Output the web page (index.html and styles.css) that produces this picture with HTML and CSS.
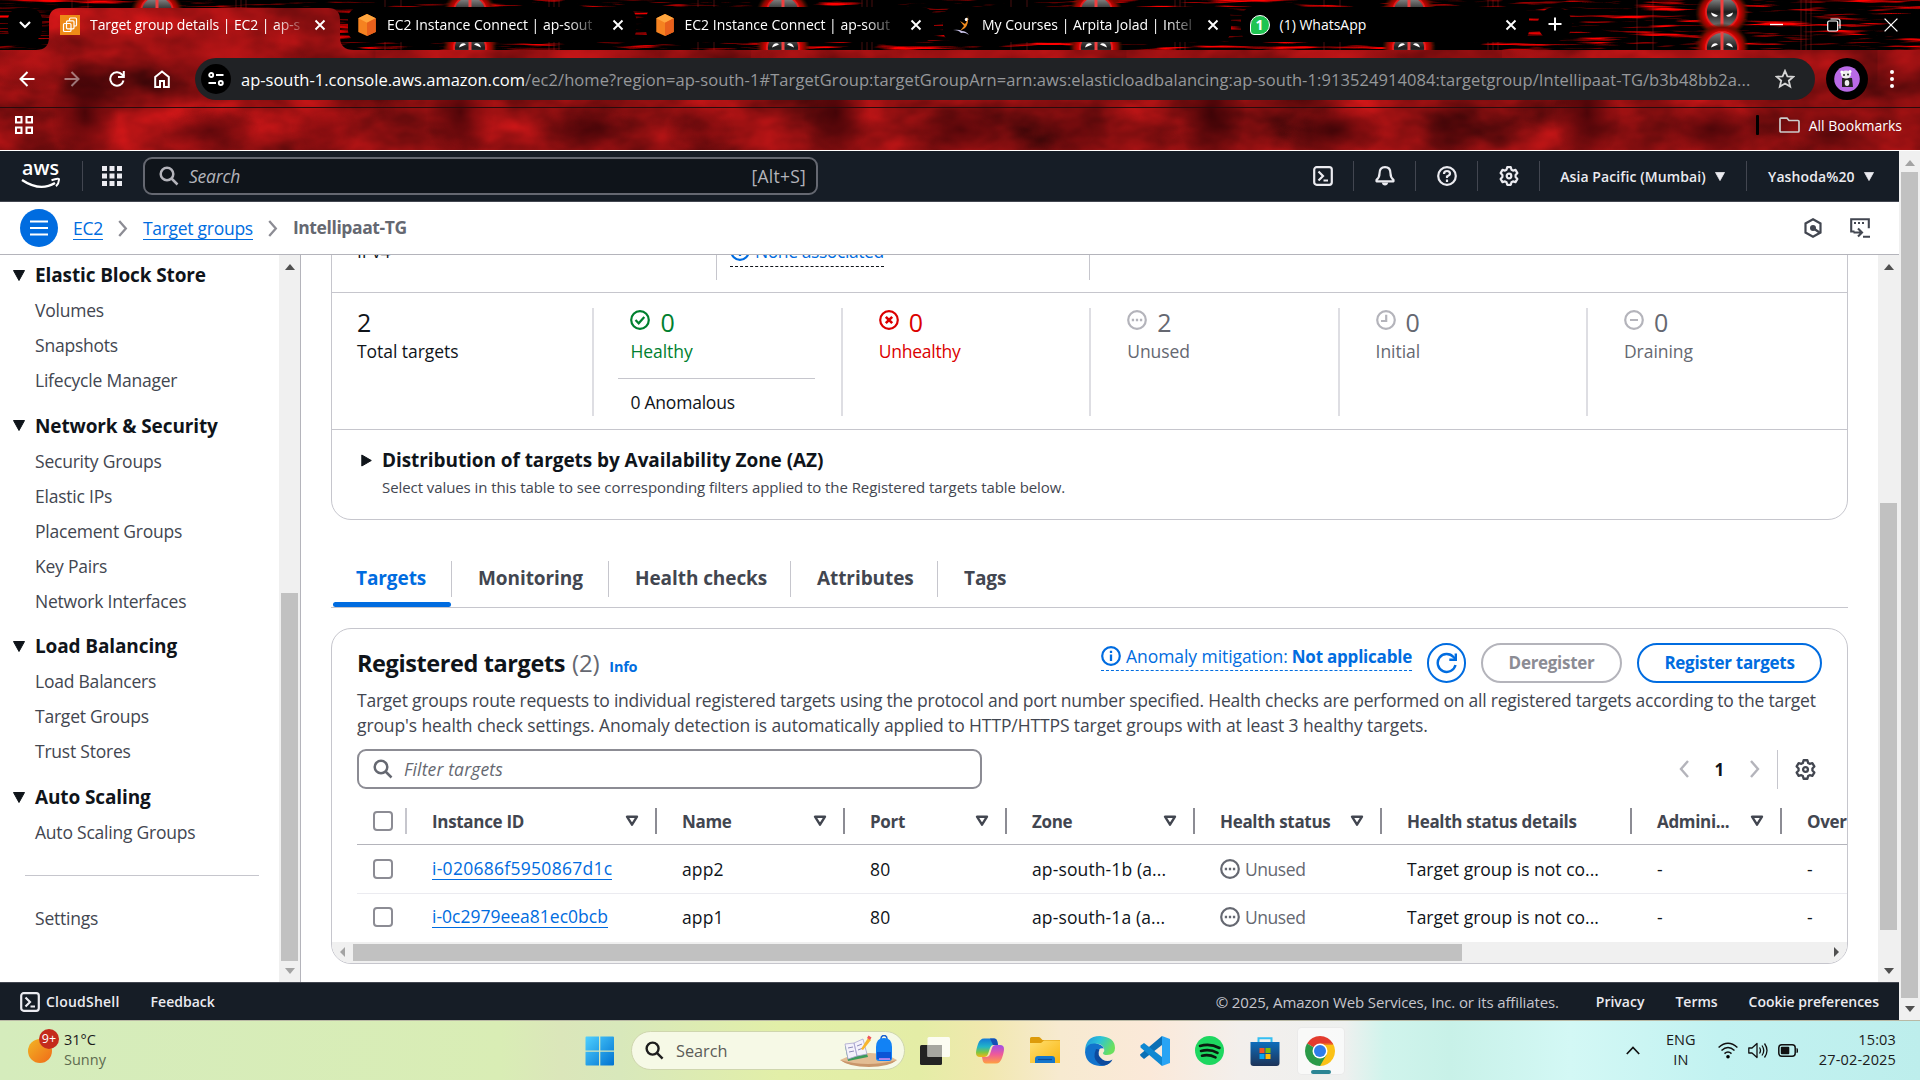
FILE: index.html
```
<!DOCTYPE html>
<html lang="en">
<head>
<meta charset="utf-8">
<title>Target group details | EC2 | ap-south-1</title>
<link rel="stylesheet" href="styles.css">
</head>
<body>
<svg class="defs" aria-hidden="true">
  <defs>
    <symbol id="close" viewBox="0 0 12 12"><path d="M1.500 1.500l9 9M10.500 1.500l-9 9" fill="none" stroke="currentColor" stroke-width="1.900"/></symbol>
    <symbol id="cube" viewBox="0 0 20 24"><path d="M10 0l9.500 4.500v15L10 24 .5 19.500v-15z" fill="#f58220"/><path d="M10 0l9.500 4.500L10 9.500.5 4.500z" fill="#ffa63f"/><path d="M10 9.500l9.500-5v15L10 24z" fill="#e8601c"/></symbol>
    <symbol id="search" viewBox="0 0 20 20"><circle cx="8" cy="8" r="6.300" fill="none" stroke="currentColor" stroke-width="2.500"/><path d="M12.500 12.500L18.500 18.500" stroke="currentColor" stroke-width="2.500"/></symbol>
    <symbol id="shell" viewBox="0 0 20 20"><rect x="1.200" y="1.200" width="17.600" height="17.600" rx="2.500" fill="none" stroke="currentColor" stroke-width="2.200"/><path d="M5.500 5.500L10 10l-4.500 4.500M10.500 14.500h4.500" fill="none" stroke="currentColor" stroke-width="2.200"/></symbol>
    <symbol id="gear" viewBox="0 0 20 20"><path d="M8.200 1.200h3.600l.7 2.500 1.500.9 2.500-.7 1.900 3.200-1.800 1.900v2l1.800 1.900-1.900 3.200-2.500-.7-1.500.9-.7 2.500H8.200l-.7-2.500-1.500-.9-2.500.7-1.900-3.200L3.400 11V9L1.600 7.100l1.900-3.200 2.500.7 1.500-.9z" fill="none" stroke="currentColor" stroke-width="2.200" stroke-linejoin="round"/><circle cx="10" cy="10" r="2.300" fill="none" stroke="currentColor" stroke-width="2.200"/></symbol>
    <symbol id="info" viewBox="0 0 20 20"><circle cx="10" cy="10" r="8.800" fill="none" stroke="currentColor" stroke-width="2.200"/><path d="M10 8.500v6.500M10 4.800v2.200" stroke="currentColor" stroke-width="2.300"/></symbol>
    <symbol id="pending" viewBox="0 0 20 20"><circle cx="10" cy="10" r="8.800" fill="none" stroke="currentColor" stroke-width="2.200"/><path d="M4.800 10h2.300M8.850 10h2.300M12.900 10h2.300" stroke="currentColor" stroke-width="2.300"/></symbol>
    <symbol id="ok" viewBox="0 0 20 20"><circle cx="10" cy="10" r="8.800" fill="none" stroke="currentColor" stroke-width="2.200"/><path d="M5.500 10l3.200 3.300 5.600-6.300" fill="none" stroke="currentColor" stroke-width="2.200"/></symbol>
    <symbol id="bad" viewBox="0 0 20 20"><circle cx="10" cy="10" r="8.800" fill="none" stroke="currentColor" stroke-width="2.200"/><path d="M6.800 6.800l6.400 6.400M13.200 6.800l-6.400 6.400" fill="none" stroke="currentColor" stroke-width="2.600"/></symbol>
    <symbol id="clock" viewBox="0 0 20 20"><circle cx="10" cy="10" r="8.800" fill="none" stroke="currentColor" stroke-width="2.200"/><path d="M10.200 4.800v6.200H5" fill="none" stroke="currentColor" stroke-width="2.200"/></symbol>
    <symbol id="minus" viewBox="0 0 20 20"><circle cx="10" cy="10" r="8.800" fill="none" stroke="currentColor" stroke-width="2.200"/><path d="M6 10h8" stroke="currentColor" stroke-width="2.200"/></symbol>
    <symbol id="sort" viewBox="0 0 14 12"><path d="M2 1.700h10L7 9.700z" fill="none" stroke="currentColor" stroke-width="2.400" stroke-linejoin="round"/></symbol>
    <symbol id="caret" viewBox="0 0 12 11"><path d="M.5.5h11L6 10.500z" fill="currentColor" stroke="currentColor" stroke-linejoin="round"/></symbol>
    <symbol id="chev" viewBox="0 0 10 18"><path d="M1 1l7 8-7 8" fill="none" stroke="currentColor" stroke-width="2.400"/></symbol>
  </defs>
</svg>

<header class="browser">
  <svg class="theme" width="1920" height="151" aria-hidden="true">
    <defs>
      <filter id="streaks" x="0" y="0" width="100%" height="100%" color-interpolation-filters="sRGB">
        <feTurbulence type="fractalNoise" baseFrequency="0.016 0.260" numOctaves="3" seed="8"/>
        <feColorMatrix values="4.200 0 0 0 -2.250  0 0 0 0 0  0 0 0 0 0  0 0 0 0 1"/>
      </filter>
      <filter id="clouds" x="0" y="0" width="100%" height="100%" color-interpolation-filters="sRGB">
        <feTurbulence type="fractalNoise" baseFrequency="0.012 0.020" numOctaves="4" seed="5"/>
        <feColorMatrix values=".8 0 0 0 .16  .09 0 0 0 .015  .09 0 0 0 .02  0 0 0 0 1"/>
      </filter>
      <radialGradient id="shade"><stop offset="0" stop-color="#2a0004" stop-opacity=".75"/><stop offset="1" stop-color="#2a0004" stop-opacity="0"/></radialGradient>
      <radialGradient id="light"><stop offset="0" stop-color="#d8181a" stop-opacity=".7"/><stop offset="1" stop-color="#d8181a" stop-opacity="0"/></radialGradient>
      <radialGradient id="glow"><stop offset=".62" stop-color="#e00000"/><stop offset=".82" stop-color="#7a0800"/><stop offset="1" stop-color="#3a1a00" stop-opacity="0"/></radialGradient>
      <linearGradient id="steel" x1="0" x2="0" y1="0" y2="1"><stop offset="0" stop-color="#9a9a9a"/><stop offset=".5" stop-color="#1c1c1c"/><stop offset="1" stop-color="#7f7f7f"/></linearGradient>
      <g id="mask">
        <ellipse cx="0" cy="13" rx="27" ry="24" fill="url(#glow)"/>
        <circle cx="0" cy="12" r="16" fill="url(#steel)" stroke="#e02020" stroke-width="1.800"/>
        <path d="M0-4v32" stroke="#f04040" stroke-width="3"/>
        <path d="M-11 12.500l7 3c-2 2.400-6 1.500-7-3zM11 12.500l-7 3c2 2.400 6 1.500 7-3z" fill="#fff"/>
      </g>
      <pattern id="masks" width="313" height="60" patternUnits="userSpaceOnUse">
        <path d="M72 0v60M88 0v60M236 0v60M241 0v60M246 0v60" stroke="#b02020" stroke-opacity=".4"/>
        <use href="#mask" x="157"/>
        <use href="#mask" transform="translate(157 60) scale(1 -1)"/>
      </pattern>
      <pattern id="spots" width="375.500" height="151" patternUnits="userSpaceOnUse">
        <ellipse cx="215" cy="55" rx="70" ry="34" fill="url(#light)"/>
        <ellipse cx="30" cy="62" rx="50" ry="30" fill="url(#light)" opacity=".6"/>
        <ellipse cx="85" cy="112" rx="34" ry="56" fill="url(#shade)"/>
        <ellipse cx="210" cy="130" rx="50" ry="26" fill="url(#shade)" opacity=".8"/>
        <ellipse cx="325" cy="130" rx="36" ry="30" fill="url(#shade)" opacity=".5"/>
      </pattern>
      <clipPath id="toolbarShape"><path d="M0 50h36q13 0 13-13V20q0-12 12-12h267q12 0 12 12v17q0 13 14 13h1566v100H0z"/></clipPath>
    </defs>
    <rect width="1920" height="50" filter="url(#streaks)"/>
    <rect width="1920" height="50" fill="url(#masks)"/>
    <g clip-path="url(#toolbarShape)">
      <rect width="1920" height="150" filter="url(#clouds)"/>
      <rect width="1920" height="150" fill="url(#spots)"/>
    </g>
    <path d="M0 107.500h1920" stroke="#2a0a0c"/>
    <path d="M0 150.500h1920" stroke="#fff"/>
  </svg>

  <div class="tabstrip">
    <div class="tab-menu"><svg width="12" height="8" viewBox="0 0 12 8"><path d="M1 1l5 5 5-5" fill="none" stroke="#fff" stroke-width="2.200"/></svg></div>
    <div class="tab tab-active">
      <svg class="fav" width="20" height="20" viewBox="0 0 20 20"><rect width="20" height="20" fill="#ee8a17"/><g fill="none" stroke="#fff" stroke-width="1.200"><rect x="3.500" y="8.500" width="7.500" height="8" rx="1"/><rect x="6.500" y="5.800" width="7.500" height="8" rx="1"/><path d="M9.500 5.800V4q0-1 1-1h5q1 0 1 1v6q0 1-1 1h-1.500"/></g></svg>
      <span class="tab-title">Target group details | EC2 | ap-s</span><svg class="x" width="12" height="12"><use href="#close"/></svg>
    </div>
    <div class="tab"><svg class="fav" width="20" height="22"><use href="#cube"/></svg><span class="tab-title">EC2 Instance Connect | ap-sout</span><svg class="x" width="12" height="12"><use href="#close"/></svg></div>
    <div class="tab"><svg class="fav" width="20" height="22"><use href="#cube"/></svg><span class="tab-title">EC2 Instance Connect | ap-sout</span><svg class="x" width="12" height="12"><use href="#close"/></svg></div>
    <div class="tab"><svg class="fav" width="20" height="20" viewBox="0 0 20 20"><circle cx="14.500" cy="4.500" r="1.700" fill="#fff"/><path d="M16 0q1 9-3 13l-5 3 4-5-4-5 5 3q3-3 3-9z" fill="#f08a1d"/><path d="M1 15q6-1 9 1 4 0 7 4-4-3-8-2-2-3-8-3z" fill="#c9c3ea"/></svg><span class="tab-title">My Courses | Arpita Jolad | Intel</span><svg class="x" width="12" height="12"><use href="#close"/></svg></div>
    <div class="tab"><span class="fav whatsapp">1</span><span class="tab-title full">(1) WhatsApp</span><svg class="x" width="12" height="12"><use href="#close"/></svg></div>
    <div class="newtab"><svg width="14" height="14" viewBox="0 0 14 14"><path d="M7 .5v13M.5 7h13" stroke="#fff" stroke-width="2"/></svg></div>
    <div class="winctl">
      <svg width="14" height="14" viewBox="0 0 14 14"><path d="M0 6.500h13" stroke="#fff" stroke-width="1.300"/></svg>
      <svg width="14" height="14" viewBox="0 0 14 14"><rect x=".7" y="3" width="10" height="10" rx="1.500" fill="#000" stroke="#fff" stroke-width="1.200"/><path d="M3.500 1h7.500q2 0 2 2v7.500" fill="none" stroke="#fff" stroke-width="1.200"/></svg>
      <svg width="14" height="14" viewBox="0 0 14 14"><path d="M.6.6l12.800 12.800M13.400.6L.6 13.400" stroke="#fff" stroke-width="1.300"/></svg>
    </div>
  </div>

  <div class="toolbar">
    <svg width="16" height="16" viewBox="0 0 16 16"><path d="M15.500 8H1.500M8.500 1L1.500 8l7 7" fill="none" stroke="#fff" stroke-width="2"/></svg>
    <svg class="dim" width="16" height="16" viewBox="0 0 16 16"><path d="M.5 8h14M7.500 1l7 7-7 7" fill="none" stroke="#fff" stroke-width="2"/></svg>
    <svg width="16" height="16" viewBox="0 0 16 16"><path d="M14.500 9.500A6.700 6.700 0 1 1 13 3.500L15 5.500" fill="none" stroke="#fff" stroke-width="2"/><path d="M14.800 0v6H9" fill="none" stroke="#fff" stroke-width="2"/></svg>
    <svg width="16" height="18" viewBox="0 0 16 18"><path d="M1.200 17V7L8 1.500 14.800 7v10H10v-6H6v6z" fill="none" stroke="#fff" stroke-width="2"/></svg>
    <div class="omnibox">
      <span class="site"><svg width="16" height="14" viewBox="0 0 16 14"><g fill="none" stroke="#fff" stroke-width="1.900"><circle cx="3.200" cy="3" r="2"/><path d="M8 3h7.500M.5 11H8"/><circle cx="12.800" cy="11" r="2"/></g></svg></span>
      <span class="url"><b>ap-south-1.console.aws.amazon.com</b>/ec2/home?region=ap-south-1#TargetGroup:targetGroupArn=arn:aws:elasticloadbalancing:ap-south-1:913524914084:targetgroup/Intellipaat-TG/b3b48bb2a...</span>
      <svg class="star" width="20" height="20" viewBox="0 0 20 20"><path d="M10 1.800l2.400 5.500 6 .5-4.600 3.900 1.400 5.900L10 14.500l-5.200 3.100 1.400-5.900L1.600 7.800l6-.5z" fill="none" stroke="#d5d5d5" stroke-width="1.800"/></svg>
    </div>
    <span class="avatar"><svg width="26" height="26" viewBox="0 0 26 26"><circle cx="13" cy="13" r="12.800" fill="#b96ae6"/><path d="M8 12h10l1 9H8z" fill="#222"/><ellipse cx="12" cy="8.500" rx="5" ry="4" fill="#eee"/><circle cx="7.800" cy="6" r="1.500" fill="#fff"/><circle cx="16" cy="5.500" r="1.500" fill="#fff"/><circle cx="10" cy="9" r="1" fill="#222"/><circle cx="14" cy="8.500" r="1" fill="#222"/><ellipse cx="13" cy="17" rx="2.300" ry="3" fill="#eee"/></svg></span>
    <svg class="dots" width="4" height="18" viewBox="0 0 4 18"><g fill="#fff"><circle cx="2" cy="2" r="2"/><circle cx="2" cy="9" r="2"/><circle cx="2" cy="16" r="2"/></g></svg>
  </div>

  <div class="bookmarks">
    <svg width="18" height="18" viewBox="0 0 18 18"><g fill="none" stroke="#fff" stroke-width="2"><path d="M1 1h5.500v5.500H1zM11.500 1H17v5.500h-5.500zM1 11.500h5.500V17H1zM11.500 11.500H17V17h-5.500z"/></g></svg>
    <div class="all-bm"><span class="bm-sep"></span><svg width="21" height="16" viewBox="0 0 21 16"><path d="M2 1.200h6l2 2.300h9q1 0 1 1V14q0 1-1 1H2q-1 0-1-1V2q0-.8 1-.8z" fill="none" stroke="#ccc" stroke-width="1.700"/></svg><span>All Bookmarks</span></div>
  </div>
</header>

<div class="viewport">
  <div class="console">
    <nav class="topnav">
      <svg class="aws" width="40" height="28" viewBox="0 0 40 28"><text x="1" y="13" textLength="37" lengthAdjust="spacingAndGlyphs">aws</text><path d="M1 18q18 12 33 3" fill="none" stroke="#fff" stroke-width="2.400"/><path d="M30.500 18.200q8-2.500 7.500-.5-.2 4-3 6.500" fill="none" stroke="#fff" stroke-width="2"/></svg>
      <span class="sep"></span>
      <svg class="grid9" width="20" height="20" viewBox="0 0 20 20"><path d="M0 2.500h5M7.500 2.500h5M15 2.500h5M0 10h5M7.500 10h5M15 10h5M0 17.500h5M7.500 17.500h5M15 17.500h5" stroke="#ebebf0" stroke-width="5"/></svg>
      <div class="searchbox"><svg width="20" height="20"><use href="#search"/></svg><i>Search</i><span>[Alt+S]</span></div>
      <div class="nav-right">
        <span class="cell"><svg width="20" height="20"><use href="#shell"/></svg></span>
        <span class="cell"><svg width="20" height="20" viewBox="0 0 20 20"><path d="M10 1.200q5.500 0 5.500 6.300 0 4 3 6.300v1.500h-17v-1.500q3-2.300 3-6.300 0-6.300 5.500-6.300z" fill="none" stroke="currentColor" stroke-width="2.200" stroke-linejoin="round"/><path d="M6.800 16.500q.5 3 3.200 3t3.200-3z" fill="currentColor"/></svg></span>
        <span class="cell"><svg width="20" height="20" viewBox="0 0 20 20"><circle cx="10" cy="10" r="8.800" fill="none" stroke="currentColor" stroke-width="2.200"/><path d="M7 8q0-3 3-3t3 2.600Q13 9.300 10 10.500V12M10 13.500V16" fill="none" stroke="currentColor" stroke-width="2.200"/></svg></span>
        <span class="cell"><svg width="20" height="20"><use href="#gear"/></svg></span>
        <span class="cell region">Asia Pacific (Mumbai)<svg width="10" height="9"><use href="#caret"/></svg></span>
        <span class="cell user">Yashoda%20<svg width="10" height="9"><use href="#caret"/></svg></span>
      </div>
    </nav>

    <div class="crumbs">
      <span class="burger"><svg width="18" height="16" viewBox="0 0 18 16"><path d="M0 1.500h18M0 8h18M0 14.500h18" stroke="#fff" stroke-width="2.200"/></svg></span>
      <a class="c1">EC2</a><svg width="10" height="17"><use href="#chev"/></svg>
      <a class="c2">Target groups</a><svg width="10" height="17"><use href="#chev"/></svg>
      <b>Intellipaat-TG</b>
      <svg class="tool" width="18" height="20" viewBox="0 0 18 20"><path d="M9 1.300l7.500 4.200v9L9 18.700l-7.500-4.200v-9z" fill="none" stroke="#424650" stroke-width="2.200"/><circle cx="9" cy="10" r="3" fill="#424650"/><path d="M9 10l6.500 4.500" stroke="#424650" stroke-width="2.200"/></svg>
      <svg class="tool2" width="20" height="20" viewBox="0 0 20 20"><g fill="none" stroke="#424650" stroke-width="2.100"><path d="M4.500 13.500H1.200V1.200h17.600v9M4 5h2M8 5h2M12 5h2M3.500 14.500H11M8 10.500l4 4-4 4M13 18.800h7"/></g></svg>
    </div>

    <div class="work">
      <aside class="side">
        <div class="side-list">
          <h3><svg width="12" height="11"><use href="#caret"/></svg>Elastic Block Store</h3>
          <a>Volumes</a><a>Snapshots</a><a>Lifecycle Manager</a>
          <h3><svg width="12" height="11"><use href="#caret"/></svg>Network &amp; Security</h3>
          <a>Security Groups</a><a>Elastic IPs</a><a>Placement Groups</a><a>Key Pairs</a><a>Network Interfaces</a>
          <h3><svg width="12" height="11"><use href="#caret"/></svg>Load Balancing</h3>
          <a>Load Balancers</a><a>Target Groups</a><a>Trust Stores</a>
          <h3><svg width="12" height="11"><use href="#caret"/></svg>Auto Scaling</h3>
          <a>Auto Scaling Groups</a>
          <hr>
          <a>Settings</a>
        </div>
        <div class="vbar side-bar"><i class="up"></i><span class="thumb"></span><i class="down off"></i></div>
      </aside>

      <main class="main">
        <section class="card details">
          <div class="facts">
            <div>IPv4</div>
            <div><span class="none"><svg width="20" height="20"><use href="#info"/></svg>None associated</span></div>
            <div></div>
          </div>
          <div class="stats">
            <div class="stat first"><p class="num">2</p><p class="lbl">Total targets</p></div>
            <div class="stat"><p class="num green"><svg width="20" height="20"><use href="#ok"/></svg>0</p><p class="lbl green">Healthy</p><p class="anom">0 Anomalous</p></div>
            <div class="stat"><p class="num red"><svg width="20" height="20"><use href="#bad"/></svg>0</p><p class="lbl red">Unhealthy</p></div>
            <div class="stat grey"><p class="num"><svg width="20" height="20"><use href="#pending"/></svg>2</p><p class="lbl">Unused</p></div>
            <div class="stat grey"><p class="num"><svg width="20" height="20"><use href="#clock"/></svg>0</p><p class="lbl">Initial</p></div>
            <div class="stat grey"><p class="num"><svg width="20" height="20"><use href="#minus"/></svg>0</p><p class="lbl">Draining</p></div>
          </div>
          <div class="distro">
            <h2><svg width="11" height="13" viewBox="0 0 11 13"><path d="M.8 1v11l9.500-5.500z" fill="#0f141a" stroke="#0f141a" stroke-linejoin="round"/></svg>Distribution of targets by Availability Zone (AZ)</h2>
            <p>Select values in this table to see corresponding filters applied to the Registered targets table below.</p>
          </div>
        </section>

        <div class="tabs">
          <span class="on">Targets</span><span class="t-mon">Monitoring</span><span class="t-health">Health checks</span><span class="t-attr">Attributes</span><span>Tags</span>
        </div>

        <section class="card targets">
          <div class="head">
            <h1>Registered targets</h1><span class="count">(2)</span><b class="infolink">Info</b>
            <span class="anomaly"><svg width="20" height="20"><use href="#info"/></svg><em>Anomaly mitigation:</em><b>Not applicable</b></span>
            <button class="btn round"><svg width="22" height="22" viewBox="0 0 22 22"><path d="M19.500 13A9 9 0 1 1 17.500 5l2.500 2.500" fill="none" stroke="currentColor" stroke-width="2.400"/><path d="M19.800 1.500v6.300h-6.500" fill="none" stroke="currentColor" stroke-width="2.400"/></svg></button>
            <button class="btn off">Deregister</button>
            <button class="btn reg">Register targets</button>
          </div>
          <p class="desc">Target groups route requests to individual registered targets using the protocol and port number specified. Health checks are performed on all registered targets according to the target<br><span>group's health check settings. Anomaly detection is automatically applied to HTTP/HTTPS target groups with at least 3 healthy targets.</span></p>
          <div class="filterrow">
            <div class="filter"><svg width="20" height="20"><use href="#search"/></svg><i>Filter targets</i></div>
            <div class="pager">
              <svg class="flip" width="10" height="18"><use href="#chev"/></svg><b>1</b><svg width="10" height="18"><use href="#chev"/></svg>
              <span class="prefs"><svg width="21" height="21"><use href="#gear"/></svg></span>
            </div>
          </div>
          <div class="table">
            <div class="tr th">
              <span class="chk"><i></i></span>
              <span>Instance ID<svg width="14" height="12"><use href="#sort"/></svg></span>
              <span>Name<svg width="14" height="12"><use href="#sort"/></svg></span>
              <span>Port<svg width="14" height="12"><use href="#sort"/></svg></span>
              <span>Zone<svg width="14" height="12"><use href="#sort"/></svg></span>
              <span>Health status<svg width="14" height="12"><use href="#sort"/></svg></span>
              <span>Health status details</span>
              <span>Admini...<svg width="14" height="12"><use href="#sort"/></svg></span>
              <span class="last">Over</span>
            </div>
            <div class="tr td line"><span class="chk"><i></i></span><span><a>i-020686f5950867d1c</a></span><span>app2</span><span>80</span><span>ap-south-1b (a...</span><span class="st"><svg width="20" height="20"><use href="#pending"/></svg>Unused</span><span class="why">Target group is not co...</span><span>-</span><span>-</span></div>
            <div class="tr td"><span class="chk"><i></i></span><span><a class="tight">i-0c2979eea81ec0bcb</a></span><span>app1</span><span>80</span><span>ap-south-1a (a...</span><span class="st"><svg width="20" height="20"><use href="#pending"/></svg>Unused</span><span class="why">Target group is not co...</span><span>-</span><span>-</span></div>
          </div>
          <div class="hbar"><i class="left"></i><span class="hthumb"></span><i class="right"></i></div>
        </section>
      </main>
      <div class="vbar main-bar"><i class="up"></i><span class="thumb"></span><i class="down"></i></div>
    </div>

    <footer class="foot">
      <svg width="20" height="20"><use href="#shell"/></svg><span class="cs">CloudShell</span><span>Feedback</span>
      <span class="copy">© 2025, Amazon Web Services, Inc. or its affiliates.</span>
      <span class="pv">Privacy</span><span class="tm">Terms</span><span class="ck">Cookie preferences</span>
    </footer>
  </div>
  <div class="vbar page-bar"><i class="up off"></i><span class="thumb"></span><i class="down"></i></div>
</div>

<div class="taskbar">
  <div class="weather">
    <div class="sun"><span>9+</span></div>
    <div class="wtext"><div>31°C</div><div class="soft">Sunny</div></div>
  </div>
  <div class="apps">
    <svg class="win" width="30" height="30" viewBox="0 0 30 30"><defs><linearGradient id="wg" x1="0" y1="0" x2="1" y2="1"><stop offset="0" stop-color="#4fd0ff"/><stop offset="1" stop-color="#0072d0"/></linearGradient></defs><path d="M1.500.5H14v14H.5v-13q0-1 1-1zM15.300.5h12.700q1 0 1 1v13H15.300zM.5 15.800H14v13.700H1.500q-1 0-1-1zM15.300 15.800H29v12.700q0 1-1 1H15.300z" fill="url(#wg)"/></svg>
    <div class="tsearch"><svg width="19" height="19"><use href="#search"/></svg><span>Search</span>
      <svg class="doodle" width="57" height="32" viewBox="0 0 57 32"><path d="M0 25q14-7 30-7t27 7q-8 6-28 6T0 25z" fill="#e3bd94"/><path d="M0 25q14 4 28 4t29-4q-8 7-28 7T0 25z" fill="#c9966b"/><path d="M5 11l18-4 5 15-20 4z" fill="#3c9a5a"/><path d="M5 9l9-1 3 13-9 3zM14 8l9-4 4 15-10 2z" fill="#f4f2fb" stroke="#a9a6cf" stroke-width=".8"/><path d="M8 13l5-1M9 17l5-1M17 11l5-2M18 15l5-2" stroke="#8c8ab8"/><path d="M21 14l7-11 3 2-8 10z" fill="#f8b62c"/><path d="M27 3l1.500-2.500 3 2L30 5z" fill="#f0555a"/><path d="M41 4q0-3.500 3-3.500T47 4" fill="none" stroke="#1a5fd0" stroke-width="1.500"/><path d="M36 12q0-9 8-9t8 9v11q0 3-3 3H39q-3 0-3-3z" fill="#1282f5"/><path d="M37 17h14v7H37z" fill="#0a55d6"/><path d="M39 24h11" stroke="#d98cf0" stroke-width="1.500"/></svg>
    </div>
    <span class="app"><svg width="30" height="28" viewBox="0 0 30 28"><rect x="0" y="8" width="22" height="20" rx="1.500" fill="#232323"/><rect x="7.500" y="0" width="22.500" height="20" rx="1.500" fill="#fff" opacity=".85"/><path d="M7.500 8H22v12H7.500z" fill="#a6a6a0"/></svg></span>
    <span class="app"><svg width="28" height="26" viewBox="0 0 28 26"><defs><linearGradient id="cpa" x1="0" y1="0" x2="0" y2="1"><stop offset="0" stop-color="#1478d8"/><stop offset=".45" stop-color="#22b5c8"/><stop offset=".75" stop-color="#7fc640"/><stop offset="1" stop-color="#f5b418"/></linearGradient><linearGradient id="cpb" x1="0" y1="0" x2="0" y2="1"><stop offset="0" stop-color="#a04ee8"/><stop offset=".5" stop-color="#ee5a9a"/><stop offset="1" stop-color="#ffa040"/></linearGradient></defs><path d="M8 .5h10q3 0 3.500 4L22 7h-5q-2 0-3 3l-2 6q-1 3-4 3H4q-4 0-4-4 0-3 2-9 2-5.500 6-5.500z" fill="url(#cpa)"/><path d="M14 .5h4q3 0 3.500 4L22 7h-5z" fill="#154fb5"/><path d="M20 25.500H10q-3 0-3.500-4L6 19h4q3 0 4-3l2-6q1-3 4-3h4q4 0 4 4 0 3-2 9-2 5.500-6 5.500z" fill="url(#cpb)"/></svg></span>
    <span class="app"><svg width="30" height="27" viewBox="0 0 30 27"><defs><linearGradient id="fd" x1="0" y1="0" x2="1" y2="1"><stop offset="0" stop-color="#ffdf70"/><stop offset="1" stop-color="#f9b611"/></linearGradient></defs><path d="M0 1.500Q0 0 1.500 0H9q1 0 2 1.500L12.500 3H30v8H0z" fill="#dd9b0a"/><path d="M0 6h11l3-2.500h16V26H0z" fill="url(#fd)"/><path d="M5 26v-4q0-3 3-3h14q3 0 3 3v4z" fill="#1476cc"/><path d="M8 22.500h14" stroke="#0b4c96" stroke-width="1.200"/></svg></span>
    <span class="app"><svg width="30" height="30" viewBox="0 0 30 30"><defs><linearGradient id="eg" x1="0" y1="0" x2="1" y2=".4"><stop offset="0" stop-color="#1f8fdd"/><stop offset=".5" stop-color="#2cc3d8"/><stop offset="1" stop-color="#6ae05e"/></linearGradient></defs><path d="M15 0q15 1 15 12 0 7-8 7-4 0-4-2 2-2 1-5-3-5-9-4Q2 10 0 16 0 0 15 0z" fill="url(#eg)"/><path d="M0 16Q1 7 10 7.500q7 .5 9 5-3-1-5 1-4 4 0 9 5 5 13 2-5 6-12 5.500Q1 29 0 16z" fill="#1273cc"/><path d="M11 13q-4 9 2 14 3 2.500 6 2.500 6-1 8.500-6-5 3-10 0-6-4-3-10z" fill="#0c4a9e"/></svg></span>
    <span class="app"><svg width="30" height="30" viewBox="0 0 30 30"><path d="M22 0v9L4 23l-3.500-3L0 18.500z" fill="#0a6fb5"/><path d="M22 30v-9L4 7 .5 9.500v2z" fill="#0f88d2"/><path d="M22 0l8 3v24l-8 3z" fill="#29a4f4"/></svg></span>
    <span class="app"><svg width="29" height="29" viewBox="0 0 29 29"><circle cx="14.500" cy="14.500" r="14.500" fill="#1ed760"/><path d="M5 10q10-3 19.500 2M6 15q9-2.300 16.500 1.800M7 19.700q7-1.700 13.500 1.600" fill="none" stroke="#0b1a10" stroke-width="2.600" stroke-linecap="round"/></svg></span>
    <span class="app"><svg width="30" height="30" viewBox="0 0 30 30"><defs><linearGradient id="ms" x1="0" y1="0" x2="0" y2="1"><stop offset="0" stop-color="#0e6dbb"/><stop offset="1" stop-color="#1d3358"/></linearGradient></defs><path d="M8.500 7V2.200h13V7" fill="none" stroke="#35bff2" stroke-width="2"/><path d="M.5 6h29v21q0 3-3 3h-23q-3 0-3-3z" fill="url(#ms)"/><path d="M9.500 12h5v5h-5z" fill="#f35325"/><path d="M15.500 12h5v5h-5z" fill="#81bc06"/><path d="M9.500 18h5v5h-5z" fill="#05a6f0"/><path d="M15.500 18h5v5h-5z" fill="#ffba08"/></svg></span>
    <span class="app running"><svg width="30" height="30" viewBox="0 0 30 30"><path d="M15 15L2.010 7.500A15 15 0 0 1 27.990 7.500z" fill="#e33b2e"/><path d="M15 15V7.500h12.990A15 15 0 0 1 15 30z" fill="#fbc116"/><path d="M15 7.500h13v1H15z" fill="#e33b2e"/><path d="M2.010 7.500A15 15 0 0 0 15 30l6.500-11.250L15 15z" fill="#2a9a48"/><circle cx="15" cy="15" r="7.500" fill="#fff"/><circle cx="15" cy="15" r="6" fill="#2f7de9"/></svg></span>
  </div>
  <div class="tray">
    <svg class="tchev" width="14" height="9" viewBox="0 0 14 9"><path d="M.8 8L7 1.500 13.200 8" fill="none" stroke="#111" stroke-width="1.700"/></svg>
    <div class="lang"><div>ENG</div><div>IN</div></div>
    <svg class="wifi" width="20" height="17" viewBox="0 0 20 17"><g fill="none" stroke="#111" stroke-width="1.500"><path d="M.6 5.500q9.400-8.500 18.800 0M3.500 8.500q6.500-6 13 0M6.500 11.600q3.500-3.200 7 0"/></g><circle cx="10" cy="14.700" r="1.800"/></svg>
    <svg class="vol" width="20" height="17" viewBox="0 0 20 17"><g fill="none" stroke="#111" stroke-width="1.300"><path d="M.8 6H4l5-4.500v14L4 11H.8z" stroke-linejoin="round"/><path d="M11.500 5.500q2 3 0 6M14 3.500q3.500 5 0 10M16.500 1.500q5 7 0 14"/></g></svg>
    <svg class="bat" width="21" height="13" viewBox="0 0 21 13"><rect x=".8" y=".8" width="16.400" height="11.400" rx="3" fill="none" stroke="#111" stroke-width="1.500"/><rect x="2.800" y="2.800" width="8.500" height="7.400" rx="1" fill="#111"/><path d="M18.500 4q1.500 0 1.500 1.500v2q0 1.500-1.500 1.500z" fill="#111"/></svg>
    <div class="time"><div>15:03</div><div>27-02-2025</div></div>
  </div>
</div>
</body>
</html>
```
FILE: styles.css
```
* { box-sizing: border-box; }
body {
  margin: 0;
  width: 1920px;
  height: 1080px;
  overflow: hidden;
  display: flex;
  flex-direction: column;
  font-family: "Open Sans", "Noto Sans", sans-serif;
  font-size: 17.500px;
  letter-spacing: -0.220px;
  color: #0f141a;
  background: #fff;
}
h1, h2, h3, p { margin: 0; }
svg { display: block; flex: none; }
.defs { position: absolute; width: 0; height: 0; }

/* Browser window frame */
.browser { position: relative; height: 151px; flex: none; background: #000; color: #fff; letter-spacing: 0; }
.theme { position: absolute; left: 0; top: 0; }
.tabstrip { position: relative; height: 50px; padding: 7px 0 0 8px; display: flex; }
.tab-menu { width: 34px; height: 34px; margin: 1px 8px 0 0; border-radius: 12px; background: #000; display: flex; align-items: center; justify-content: center; }
.tab { width: 288px; height: 35px; margin-right: 9.500px; padding: 0 12px 0 9px; border-radius: 12px; background: #000; display: flex; align-items: center; font-size: 14px; }
.tab-active { background: none; width: 290px; margin-right: 8px; padding: 0 14px 0 10px; letter-spacing: -0.080px; }
.fav { width: 20px; margin-right: 10px; }
.tab-title { white-space: nowrap; line-height: 24px; padding-bottom: 0; -webkit-mask-image: linear-gradient(90deg, #000 88%, rgba(0,0,0,.25)); mask-image: linear-gradient(90deg, #000 88%, rgba(0,0,0,.25)); }
.tab-title.full { -webkit-mask-image: none; mask-image: none; }
.x { margin-left: auto; }
.whatsapp { height: 20px; border-radius: 50% 50% 50% 20%; border: 1.500px solid #fff; background: #1fc451; font-weight: 700; line-height: 17px; text-align: center; }
.newtab { width: 34px; height: 34px; border-radius: 17px; background: #000; display: flex; align-items: center; justify-content: center; }
.winctl { margin-left: auto; padding-right: 22px; display: flex; gap: 43px; height: 35px; align-items: center; }
.toolbar { position: relative; height: 58px; padding: 0 16px 0 19px; display: flex; align-items: center; }
.toolbar > svg { margin-right: 29px; }
.toolbar > .dim { opacity: .45; }
.toolbar > svg:nth-of-type(4) { margin-right: 25px; }
.toolbar > .dots { margin: 0 10px 0 auto; }
.omnibox { width: 1620px; height: 51px; max-height: 51px; border-radius: 26px; background: #202225; display: flex; align-items: center; padding: 0 20px 0 6px; }
.omnibox { height: 42px; border-radius: 21px; }
.site { width: 30px; height: 30px; border-radius: 50%; background: #000; display: flex; align-items: center; justify-content: center; }
.url { margin-left: 10px; font-size: 16.500px; letter-spacing: .080px; color: #96989b; white-space: nowrap; }
.url b { font-weight: 400; color: #fff; letter-spacing: 0; }
.star { margin-left: auto; }
.avatar { width: 42px; height: 42px; margin-left: 11px; border-radius: 50%; background: #000; display: flex; align-items: center; justify-content: center; }
.bookmarks { position: relative; height: 42px; margin-top: -1px; padding: 0 18px 6px 15px; display: flex; align-items: center; justify-content: space-between; font-size: 14px; }
.all-bm { display: flex; align-items: center; }
.bm-sep { width: 3px; height: 20px; background: #000; margin-right: 20px; border-radius: 1px; }
.all-bm svg { margin-right: 9px; }

/* Console shell */
.viewport { height: 869px; display: flex; flex: none; }
.console { width: 1899px; display: flex; flex-direction: column; }
.topnav { height: 51px; flex: none; background: #161d26; border-bottom: 1px solid #424650; display: flex; align-items: center; color: #ebebf0; }
.aws { margin-left: 21px; }
.aws text { font: 600 19.500px "Open Sans", sans-serif; fill: #fff; letter-spacing: 0; }
.sep { width: 1px; height: 30px; background: #424650; margin-left: 21px; }
.grid9 { margin-left: 19px; }
.searchbox { width: 675px; height: 38px; margin-left: 21px; border: 2px solid #656871; border-radius: 9px; background: #0f141a; display: flex; align-items: center; padding: 0 10px 0 14px; color: #b4b4bb; }
.searchbox i { margin-left: 10px; line-height: 24px; margin-top: -1px; }
.searchbox span { margin-left: auto; letter-spacing: .250px; line-height: 24px; margin-top: -1px; }
.nav-right { margin-left: auto; display: flex; align-items: center; font-size: 14px; font-weight: 600; letter-spacing: .100px; }
.cell { width: 62px; height: 30px; display: flex; align-items: center; justify-content: center; border-right: 1px solid #424650; }
.cell svg { width: 20px; height: 20px; }
.region { width: 208px; margin-left: -1px; }
.user { width: 152px; border: 0; justify-content: flex-start; padding-left: 21px; }
.region svg, .user svg { width: 10px; height: 9px; margin-left: 9px; }
.crumbs { height: 53px; flex: none; border-bottom: 1px solid #b4b4bb; display: flex; align-items: center; padding: 0 29px 0 20px; color: #8c8c94; }
.burger { width: 38px; height: 38px; border-radius: 50%; background: #006ce0; display: flex; align-items: center; justify-content: center; margin-right: 15px; }
.crumbs a { color: #006ce0; border-bottom: 1px solid #006ce0; line-height: 22px; letter-spacing: -0.280px; }
.crumbs a + svg { margin: 0 15px; }
.crumbs b { color: #656871; letter-spacing: -0.400px; margin-top: -2px; }
.crumbs .tool { margin-left: auto; }
.tool2 { margin-left: 28px; }
.work { height: 727px; flex: none; display: flex; }

/* Scrollbars */
.vbar { width: 21px; background: #f0f0f0; position: relative; display: flex; flex-direction: column; align-items: center; }
.vbar i { border: 5px solid transparent; position: absolute; }
.vbar .up { border-bottom: 6px solid #505050; border-top: 0; top: 9px; }
.vbar .down { border-top: 6px solid #505050; border-bottom: 0; bottom: 8px; }
.vbar .up.off { border-bottom-color: #a3a3a3; }
.vbar .down.off { border-top-color: #a3a3a3; }
.thumb { width: 17px; background: #c1c1c1; }
.side-bar .thumb { margin-top: 338px; height: 368px; }
.main-bar .thumb { margin-top: 248px; height: 427px; }
.page-bar .thumb { margin-top: 21px; height: 826px; }

/* Navigation list */
.side { width: 301px; flex: none; display: flex; border-right: 1px solid #b4b4bb; }
.side-list { width: 279px; padding-top: 2px; display: flex; flex-direction: column; overflow: hidden; }
.side h3 { height: 36px; flex: none; margin-top: 9.700px; font-size: 19px; letter-spacing: -0.120px; display: flex; align-items: center; padding-left: 13px; gap: 10px; }
.side h3:first-child { margin-top: 0; }
.side a { height: 35px; flex: none; line-height: 34px; padding-left: 35px; color: #424650; }
.side hr { width: 234px; height: 1px; flex: none; border: 0; background: #c6c6cd; margin: 25px 0 25px 25px; }

/* Content */
.main { width: 1577px; height: 727px; overflow: hidden; padding: 0 30px; }
.card { border: 1px solid #c6c6cd; border-radius: 20px; overflow: hidden; background: #fff; }
.details { margin-top: -21px; height: 286px; }
.facts { height: 57px; padding-bottom: 12px; display: flex; }
.facts div { border-left: 1px solid #c6c6cd; padding: 4px 0 0 13px; width: 373px; height: 45px; line-height: 24px; }
.facts div:first-child { border: 0; padding-left: 25px; width: 384px; }
.none { display: inline-flex; gap: 5px; align-items: center; color: #006ce0; border-bottom: 1px dashed #0f141a; height: 28px; padding-bottom: 3px; letter-spacing: -0.420px; }
.stats { height: 138px; border-top: 1px solid #c6c6cd; border-bottom: 1px solid #c6c6cd; padding: 15px 0 0 12px; display: flex; }
.stat { width: 248.400px; flex: none; height: 108px; border-left: 2px solid #dedee3; padding: 0 26px 0 24px; }
.stat.first { border: 0; padding-left: 13px; }
.stat:not(.first) .num, .stat:not(.first) .lbl, .anom { padding-left: 12px; }
.num { font-size: 25px; line-height: 28px; height: 27px; margin-top: 0; display: flex; align-items: center; gap: 10px; }
.num svg { margin-top: -3px; }
.lbl { line-height: 24px; margin-top: 4px; letter-spacing: -0.050px; }
.red.lbl { letter-spacing: -0.250px; }
.anom { margin-top: 15px; padding-top: 11px; border-top: 1px solid #c6c6cd; line-height: 24px; }
.green { color: #00802f; }
.red { color: #db0000; }
.grey { color: #656871; }
.grey svg { color: #b4b4bb; }
.distro { padding: 15px 0 0 29px; }
.distro h2 { font-size: 19px; line-height: 30px; letter-spacing: -0.070px; display: flex; align-items: center; gap: 10px; }
.distro p { font-size: 15px; line-height: 20px; margin: 2px 0 0 21px; color: #424650; letter-spacing: -0.075px; }
.tabs { height: 53px; margin-top: 35px; border-bottom: 1px solid #c6c6cd; display: flex; font-size: 19px; letter-spacing: -0.080px; font-weight: 700; color: #424650; }
.tabs span { position: relative; padding-left: 26px; line-height: 46px; }
.tabs .on { width: 121px; }
.t-mon { width: 157px; }
.t-health { width: 182px; }
.t-attr { width: 147px; }
.tabs span:not(:last-child)::before { content: ""; position: absolute; right: 0; top: 6px; width: 1px; height: 36px; background: #c6c6cd; }
.tabs .on { color: #006ce0; padding-left: 25px; }
.tabs .on::after { content: ""; position: absolute; left: 2px; right: 1px; bottom: 0; height: 5px; border-radius: 3px; background: #006ce0; }

.targets { margin-top: 20px; height: 336px; display: flex; flex-direction: column; }
.head { padding: 14px 25px 0; height: 54px; flex: none; display: flex; align-items: center; }
.head h1 { font-size: 23.500px; letter-spacing: -0.400px; line-height: 30px; margin-top: -1px; }
.count { font-size: 24px; color: #656871; margin: -2px 0 0 7px; }
.infolink { font-size: 14.500px; color: #006ce0; margin: 6px 0 0 10px; }
.anomaly { margin: -12px 15px 0 auto; height: 27px; padding-bottom: 1px; display: flex; align-items: center; color: #006ce0; border-bottom: 1px dashed #006ce0; }
.anomaly em { font-style: normal; margin: 0 4px 0 5px; letter-spacing: -0.070px; }
.anomaly b { font-size: 17px; }
.btn { height: 40px; border: 2px solid #006ce0; border-radius: 20px; background: #fff; color: #006ce0; font: 700 17px "Open Sans", sans-serif; letter-spacing: -0.300px; padding: 0 0 2px; width: 185px; }
.btn.round { width: 39px; padding: 0; display: flex; align-items: center; justify-content: center; margin-right: 15px; }
.btn.off { width: 141px; border-color: #b4b4bb; color: #8c8c94; margin-right: 15px; }
.desc { padding: 0 0 0 25px; margin-top: 5px; line-height: 25px; color: #424650; white-space: nowrap; letter-spacing: -0.228px; }
.desc span { letter-spacing: -0.110px; }
.filterrow { height: 40px; flex: none; margin: 11px 25px 0; display: flex; justify-content: space-between; }
.filter { width: 625px; border: 2px solid #8c8c94; border-radius: 9px; display: flex; align-items: center; padding-left: 14px; gap: 11px; color: #656871; letter-spacing: .150px; }
.filter i { margin-top: -1px; }
.pager { display: flex; align-items: center; color: #b4b4bb; }
.pager b { color: #0f141a; font-size: 17px; margin: 0 26px 0 25px; }
.flip { transform: scaleX(-1); }
.prefs { height: 39px; margin-left: 17px; padding: 0 6px 0 17px; border-left: 1px solid #c6c6cd; color: #424650; display: flex; align-items: center; }
.table { margin: 9px 0 0 25px; width: 1600px; flex: none; }
.tr { display: grid; grid-template-columns: 50px 250px 188px 162px 188px 187px 250px 150px 175px; height: 48px; align-items: center; }
.tr > span { padding-left: 25px; white-space: nowrap; position: relative; display: flex; align-items: center; }
.tr > .chk { padding-left: 16px; }
.chk i { width: 20px; height: 20px; flex: none; border: 2px solid #8c8c94; border-radius: 4px; }
.th { height: 47px; border-bottom: 1px solid #b4b4bb; font-size: 17px; font-weight: 700; color: #424650; letter-spacing: -0.320px; }
.th > span { height: 26px; border-right: 2px solid #8c8c94; padding-right: 16px; }
.th > .chk { border-color: #c6c6cd; padding-right: 0; }
.th > .last { border: 0; }
.th svg { margin: 0 0 0 auto; }
.td { letter-spacing: .120px; }
.td > span:not(.chk) { margin-top: -1px; }
.td .chk { margin-top: -1px; }
.td a { color: #006ce0; border-bottom: 1px solid #006ce0; line-height: 22px; letter-spacing: .280px; }
.td .tight { letter-spacing: 0; }
.td + .td { height: 46px; }
.line { height: 49px; border-bottom: 1px solid #ebebf0; }
.td > .st { color: #656871; gap: 5px; letter-spacing: -0.450px; }
.why { letter-spacing: 0; }
.hbar { height: 21px; flex: none; background: #f0f0f0; position: relative; padding: 2px 0 0 21px; margin-top: auto; }
.hthumb { display: block; width: 1109px; height: 17px; background: #c1c1c1; }
.hbar i { position: absolute; top: 5px; border: 5px solid transparent; }
.hbar .left { left: 8px; border-right: 5px solid #a3a3a3; border-left: 0; }
.hbar .right { right: 8px; border-left: 5px solid #505050; border-right: 0; }

.foot { height: 38px; flex: none; background: #161d26; border-top: 1px solid #424650; display: flex; align-items: center; padding: 0 20px; color: #ebebf0; font-size: 14px; font-weight: 600; letter-spacing: 0; }
.cs { margin: 0 31px 0 6px; letter-spacing: .220px; }
.copy { margin-left: auto; margin-right: 37px; font-weight: 400; color: #c6c6cd; font-size: 15px; letter-spacing: -0.130px; }
.pv { margin-right: 31px; }
.tm { margin-right: 31px; }

/* Taskbar */
.taskbar { height: 60px; flex: none; border-top: 1px solid #b9b9a5; display: flex; align-items: center; letter-spacing: 0; font-size: 14.500px; color: #1b1b1b;
  background: linear-gradient(90deg, #d5ecbc 0, #d9edb5 500px, #dbe6ba 560px, #d8e8bb 620px, #e2efa8 780px, #e4eda6 920px, #f1e8ae 985px, #f7ead0 1060px, #fbe9d9 1150px, #f3efec 1240px, #eef0ef 1345px, #d0f4ec 1385px, #c8f1e8 1450px, #d3f8f5 1570px, #c2f2f1 1720px, #bdeeec 1920px); }
.weather { width: 585px; padding-left: 28px; margin-top: -1px; display: flex; }
.sun { position: relative; width: 24px; height: 24px; margin-top: 9px; border-radius: 50%; background: linear-gradient(135deg, #f2b524, #f06a18); }
.sun span { position: absolute; left: 11px; top: -10px; width: 20px; height: 20px; border-radius: 50%; background: #c42b1c; color: #fff; font-size: 12.500px; line-height: 20px; text-align: center; }
.wtext { margin-left: 12px; line-height: 20.500px; }
.soft { color: #5e6b50; }
.apps { width: 766px; display: flex; align-items: center; }
.tsearch { width: 274px; height: 39px; margin: 0 2px 0 16px; border-radius: 20px; background: #f6f9e6; border: 1px solid #cfd6ae; display: flex; align-items: center; padding: 0 7px 0 13px; font-size: 16.300px; color: #5c5c58; }
.tsearch > svg:first-child { color: #1d1d1d; }
.tsearch span { margin-left: 12px; }
.doodle { margin-left: auto; }
.app { width: 55px; height: 48px; display: flex; align-items: center; justify-content: center; flex: none; }
.running { position: relative; width: 48px; margin-left: 5px; padding-right: 2px; border-radius: 5px; background: rgba(255,255,255,.6); border: 1px solid rgba(0,0,0,.06); }
.running::after { content: ""; position: absolute; bottom: 0; left: 13px; width: 20px; height: 4px; border-radius: 2px; background: #2b8594; }
.tray { margin-left: auto; padding-right: 24px; display: flex; align-items: center; line-height: 20.500px; margin-top: -1px; }
.tchev { margin-right: 26px; }
.lang { width: 30px; text-align: center; margin-right: 22px; }
.wifi { margin-right: 10px; }
.vol { margin-right: 10px; }
.bat { margin-right: 20px; }
.time { text-align: right; letter-spacing: .150px; }
```
